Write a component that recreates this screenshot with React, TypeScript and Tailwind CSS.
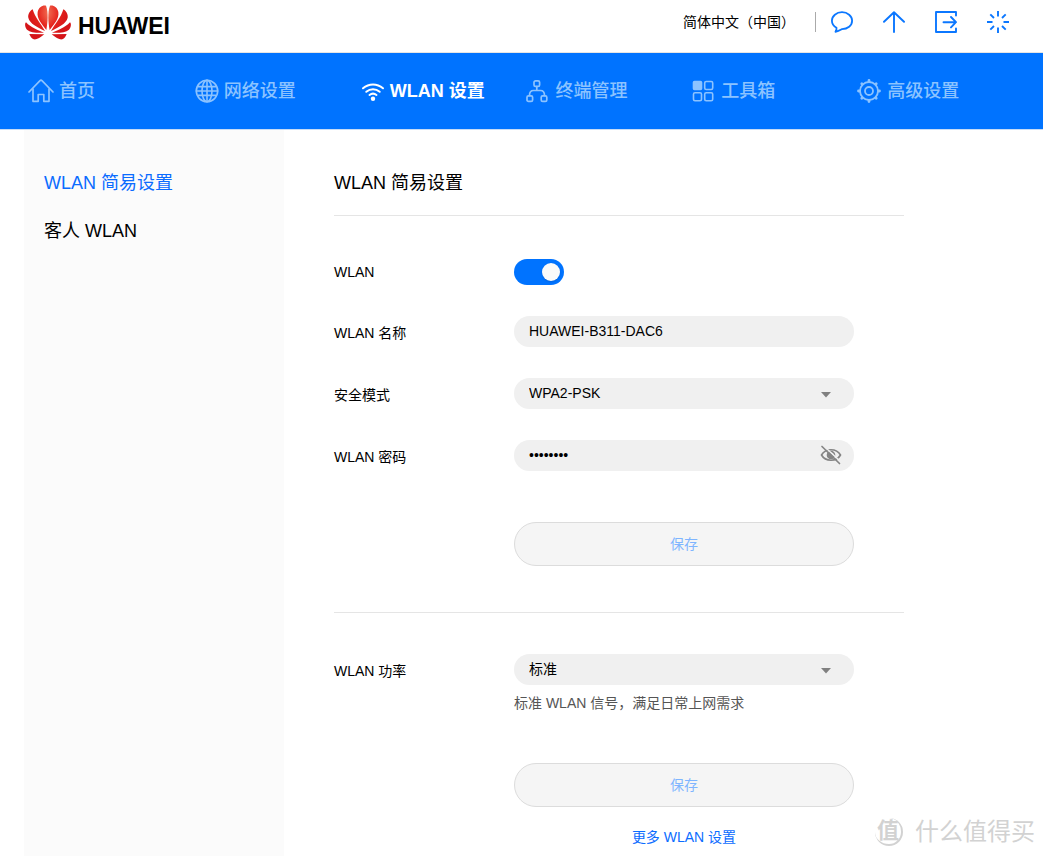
import { useState } from "react";
import type { ReactNode } from "react";

const stroke = {
  fill: "none",
  stroke: "currentColor",
  strokeLinecap: "round" as const,
  strokeLinejoin: "round" as const,
};

const HomeIcon = () => (
  <svg width="26" height="26" viewBox="0 0 26 26" strokeWidth="1.7" {...stroke}>
    <path d="M1 14 11.8 2.8q1.2-1.2 2.4 0L25 14" />
    <path d="M5 11v12.3h5.2v-6.8h5.6v6.8H21V11" />
  </svg>
);

const GlobeIcon = () => (
  <svg width="25" height="26" viewBox="0 0 25 26" strokeWidth="1.6" {...stroke}>
    <circle cx="13" cy="13" r="10.7" />
    <ellipse cx="13" cy="13" rx="5" ry="10.7" />
    <path d="M13 2.3v21.4M2.3 13h21.4M4 8.6h18M4 17.4h18" />
  </svg>
);

const WifiIcon = () => (
  <svg width="25" height="26" viewBox="0 0 25 26" strokeWidth="2" {...stroke}>
    <path d="M3 10.3c6-5.2 14-5.2 20 0M6.3 13.8c4-3.4 9.4-3.4 13.4 0M9.5 17c2.2-1.7 4.800-1.700 7 0" />
    <circle cx="13" cy="20.8" r="2.2" fill="currentColor" stroke="none" />
  </svg>
);

const DevicesIcon = () => (
  <svg width="25" height="26" viewBox="0 0 25 26" strokeWidth="1.7" {...stroke}>
    <rect x="9" y="2.8" width="5.6" height="5.6" rx="1.5" />
    <rect x="2" y="17.8" width="5.6" height="5.6" rx="1.5" />
    <rect x="16.2" y="17.8" width="5.6" height="5.6" rx="1.5" />
    <path d="M11.8 8.5v4M4.5 17.5c0-3.6 1.5-5 4-5h7c2.6 0 4 1.4 4 5" />
  </svg>
);

const ToolboxIcon = () => (
  <svg width="25" height="26" viewBox="0 0 25 26" strokeWidth="1.6" {...stroke}>
    <rect x="2.5" y="3.5" width="8" height="8" rx="1" fill="currentColor" />
    <rect x="13.7" y="3.5" width="8" height="8" rx="1.5" />
    <rect x="2.5" y="14.7" width="8" height="8" rx="1.5" />
    <rect x="13.7" y="14.7" width="8" height="8" rx="1.5" />
  </svg>
);

const GearIcon = () => (
  <svg width="25" height="26" viewBox="1 0 25 26" strokeWidth="1.8" {...stroke}>
    <circle cx="13" cy="13" r="9" />
    <circle cx="13" cy="13" r="4" />
    <path
      strokeWidth="2.8"
      d="M13 2.5v1M13 22.5v1M2.5 13h1M22.5 13h1M5.8 5.8l.5.5M19.7 19.7l.5.5M5.8 20.2l.5-.5M19.7 6.3l.5-.5"
    />
  </svg>
);

const EyeOffIcon = () => (
  <svg width="22" height="20" viewBox="0 0 22 20" strokeWidth="1.7" {...stroke}>
    <path d="M1.5 10C5.5 3 16.5 3 20.5 10 16.5 17 5.5 17 1.5 10Z" />
    <circle cx="11" cy="10" r="4.3" fill="currentColor" stroke="none" />
    <path d="M11.5 8.2c1 .1 1.6.7 1.7 1.6" stroke="#f0f0f0" strokeWidth="1.2" />
    <path d="M3.5.8 21 17" stroke="#f0f0f0" strokeWidth="1.5" />
    <path d="M2 1.5 19.5 18.5" />
  </svg>
);

// Left half of the flower, the right half is mirrored
const PETALS = [
  "M138 89C124 70 109 56 112 35C115 21 126 14 137 16C145 38 142 66 138 89Z",
  "M134 92C112 81 88 70 84 52C82 42 90 30 97 27C103 50 123 72 134 92Z",
  "M131 97C110 98 90 97 80 88C73 80 73 69 77 66C92 82 114 90 131 97Z",
  "M132 102C120 112 108 119 100 117C94 115 89 107 87 101Z",
];

const HuaweiLogo = () => (
  <div className="flex items-end gap-[7px]">
    <svg width="46" height="35" viewBox="74 14 138 105" aria-hidden="true">
      <defs>
        <radialGradient id="petal" gradientUnits="userSpaceOnUse" cx="160" cy="36" r="80">
          <stop offset="0" stopColor="#f9a878" />
          <stop offset="0.3" stopColor="#ee5a44" />
          <stop offset="0.6" stopColor="#e5251d" />
          <stop offset="1" stopColor="#d51418" />
        </radialGradient>
      </defs>
      <g fill="url(#petal)">
        {PETALS.map((d) => (
          <path key={d} d={d} />
        ))}
        <g transform="translate(286 0) scale(-1 1)">
          {PETALS.map((d) => (
            <path key={d} d={d} />
          ))}
        </g>
      </g>
    </svg>
    <span className="text-[23px] leading-7 font-bold">HUAWEI</span>
  </div>
);

const NAV = [
  { id: "home", label: "首页", icon: <HomeIcon /> },
  { id: "network", label: "网络设置", icon: <GlobeIcon /> },
  { id: "wlan", label: "WLAN 设置", icon: <WifiIcon /> },
  { id: "devices", label: "终端管理", icon: <DevicesIcon /> },
  { id: "tools", label: "工具箱", icon: <ToolboxIcon /> },
  { id: "advanced", label: "高级设置", icon: <GearIcon /> },
];

const Field = ({ id, label, children }: { id: string; label: string; children: ReactNode }) => (
  <div className="flex items-center">
    <label htmlFor={id} className="w-[180px] shrink-0 pt-0.5">
      {label}
    </label>
    <div className="relative w-full max-w-[340px]">{children}</div>
  </div>
);

const inputClass = "block h-[31px] w-full rounded-full bg-[#f0f0f0] px-[15px] pb-0.5 outline-none";

const SelectBox = ({ id, options }: { id: string; options: string[] }) => (
  <>
    <select
      id={id}
      className="block h-[31px] w-full appearance-none rounded-full bg-[#f0f0f0] px-[15px] pb-0.5 outline-none"
    >
      {options.map((o) => (
        <option key={o}>{o}</option>
      ))}
    </select>
    <svg
      width="10"
      height="6"
      viewBox="0 0 10 6"
      className="pointer-events-none absolute top-[14px] right-[23px] fill-[#808080]"
    >
      <path d="M0 0h10L5 5.5Z" />
    </svg>
  </>
);

const SaveButton = () => (
  <button
    type="button"
    className="ml-[180px] h-11 w-full max-w-[340px] rounded-full border border-[#dcdcdc] bg-[#f5f5f5] text-[#7fb5ff]"
  >
    保存
  </button>
);

const App = () => {
  const [enabled, setEnabled] = useState(true);
  const [ssid, setSsid] = useState("HUAWEI-B311-DAC6");
  const [password, setPassword] = useState("12345678");
  const [showPassword, setShowPassword] = useState(false);

  return (
    <div className="relative flex min-h-screen flex-col bg-white font-['Liberation_Sans','Noto_Sans_CJK_SC',sans-serif] text-sm text-black">
      {/* Header */}
      <header className="flex h-[53px] items-start justify-between border-b border-[#e5e5e5] pt-[5px] pr-[34px] pl-[25px]">
        <HuaweiLogo />
        <div className="flex h-[34px] items-center text-[#0b77ff]">
          <button type="button" className="text-black">
            简体中文（中国）
          </button>
          <span className="ml-5 h-5 w-px bg-[#aaaaaa]" />
          <div className="ml-[15px] flex gap-[30px]">
            <button type="button" aria-label="消息">
              <svg width="22" height="22" viewBox="0 0 22 22" strokeWidth="1.8" {...stroke}>
                <path d="M5.5 16.7C2.7 15.2.9 12.6.9 9.8.9 5 5.4 1.2 11 1.2S21.1 5 21.1 9.8 16.6 18 11 18.1c-1.6.9-3.8 2.2-6.5 2.7.9-1.3 1.2-2.7 1-4.1Z" />
              </svg>
            </button>
            <button type="button" aria-label="升级">
              <svg width="22" height="22" viewBox="0 0 22 22" strokeWidth="1.9" {...stroke}>
                <path d="M11 21V1.2M1 10.8l10-9.6 10 9.6" />
              </svg>
            </button>
            <button type="button" aria-label="退出">
              <svg width="22" height="22" viewBox="0 0 22 22" strokeWidth="1.9" {...stroke}>
                <path d="M21 4.5V1H1v20h20v-3.5M8.5 11.2h12.3M16 6l5 5.2-5 5.2" />
              </svg>
            </button>
            <button type="button" aria-label="重启">
              <svg width="22" height="22" viewBox="0 0 22 22" strokeWidth="1.9" {...stroke} strokeLinecap="butt">
                <path d="M11 0v5.5M11 16.5V22M0 11h5.5M16.5 11H22M3.3 3.3 7 7M15 15l3.7 3.7M3.3 18.7 7 15M15 7l3.7-3.7" />
              </svg>
            </button>
          </div>
        </div>
      </header>

      {/* Main navigation */}
      <nav className="grid h-[77px] grid-cols-6 items-center border-b border-[#c6dcf7] bg-[#0073ff] px-6 text-lg whitespace-nowrap">
        {NAV.map((item) => (
          <a
            key={item.id}
            href={`#${item.id}`}
            className={`flex items-center gap-[5px] pl-1 ${
              item.id === "wlan" ? "font-bold text-white" : "font-medium text-[#8cc3ff]"
            }`}
          >
            {item.icon}
            <span>{item.label}</span>
          </a>
        ))}
      </nav>

      <div className="flex flex-1 px-6">
        {/* Sidebar */}
        <aside className="w-[260px] shrink-0 bg-[#fbfbfb] px-5 pt-[39px]">
          <ul className="flex flex-col gap-5 text-lg leading-7">
            <li>
              <a href="#simple" className="text-[#0b6cff]">
                WLAN 简易设置
              </a>
            </li>
            <li>
              <a href="#guest">客人 WLAN</a>
            </li>
          </ul>
        </aside>

        <main className="flex-1 pl-[50px]">
          <div className="max-w-[570px]">
            <h1 className="border-b border-[#e5e5e5] pt-[39px] pb-[18px] text-lg leading-7">WLAN 简易设置</h1>

            <form className="flex flex-col gap-[31px] border-b border-[#e5e5e5] pt-[43px] pb-[46px]">
              <div className="flex items-center">
                <label htmlFor="wlan" className="w-[180px] shrink-0">
                  WLAN
                </label>
                <input
                  id="wlan"
                  type="checkbox"
                  role="switch"
                  checked={enabled}
                  onChange={(e) => setEnabled(e.target.checked)}
                  className="flex h-[26px] w-[50px] appearance-none items-center rounded-full bg-[#c4c4c4] px-1 before:size-[18px] before:rounded-full before:bg-[#fafafa] before:shadow-sm before:content-[''] checked:justify-end checked:bg-[#0073ff]"
                />
              </div>

              <Field id="ssid" label="WLAN 名称">
                <input
                  id="ssid"
                  type="text"
                  value={ssid}
                  onChange={(e) => setSsid(e.target.value)}
                  className={inputClass}
                />
              </Field>

              <Field id="security" label="安全模式">
                <SelectBox id="security" options={["WPA2-PSK", "WPA/WPA2-PSK"]} />
              </Field>

              <Field id="password" label="WLAN 密码">
                <input
                  id="password"
                  type={showPassword ? "text" : "password"}
                  value={password}
                  onChange={(e) => setPassword(e.target.value)}
                  className={inputClass}
                />
                <button
                  type="button"
                  aria-label="显示密码"
                  onClick={() => setShowPassword(!showPassword)}
                  className="absolute top-[5px] right-3 text-[#858585]"
                >
                  <EyeOffIcon />
                </button>
              </Field>

              <div className="flex pt-5">
                <SaveButton />
              </div>
            </form>

            <form className="pt-[41px]">
              <Field id="power" label="WLAN 功率">
                <SelectBox id="power" options={["标准", "穿墙"]} />
              </Field>
              <p className="mt-2 ml-[180px] text-[#555555]">标准 WLAN 信号，满足日常上网需求</p>
              <div className="mt-[50px] flex">
                <SaveButton />
              </div>
              <div className="mt-5 ml-[180px] max-w-[340px] text-center">
                <a href="#more" className="text-[#0b6cff]">
                  更多 WLAN 设置
                </a>
              </div>
            </form>
          </div>
        </main>
      </div>

      {/* Watermark */}
      <div className="pointer-events-none absolute right-2 bottom-2 flex items-center gap-3 text-[#d2d2d2]">
        <span className="flex size-7 items-center justify-center rounded-full border-r-2 border-b-2 border-[#d2d2d2] text-[22px] font-bold">
          值
        </span>
        <span className="text-2xl">什么值得买</span>
      </div>
    </div>
  );
};

export default App;
